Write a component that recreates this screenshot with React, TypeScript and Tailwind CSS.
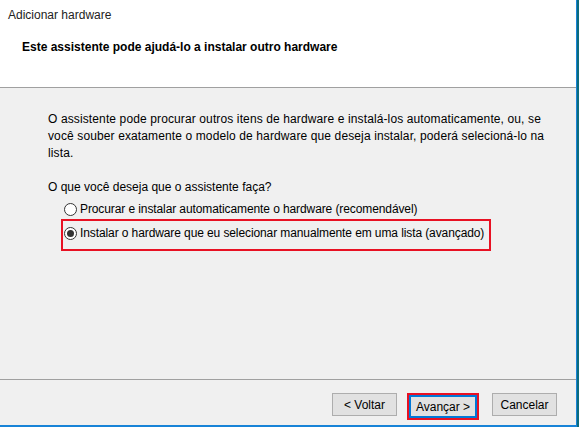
import { useState } from "react";

const options = [
  { id: "auto", label: "Procurar e instalar automaticamente o hardware (recomendável)" },
  { id: "manual", label: "Instalar o hardware que eu selecionar manualmente em uma lista (avançado)" },
];

const Radio = ({ checked }: { checked: boolean }) => (
  <span className="flex h-[13px] w-[13px] shrink-0 items-center justify-center rounded-full border border-[#333] bg-white">
    {checked && <span className="h-[7px] w-[7px] rounded-full bg-[#333]" />}
  </span>
);

const App = () => {
  const [choice, setChoice] = useState("manual");

  return (
    <div className="flex h-[427px] w-[579px] bg-[#0b6b7d] font-['Liberation_Sans',sans-serif] text-[12px] text-black">
      <div className="flex h-[427px] w-[577px] flex-col border-r border-b-2 border-[#1883d7] bg-[#f0f0f0]">
        <header className="h-[88px] border-b border-[#a0a0a0] bg-white">
          <div className="pl-[8px] pt-[7px] leading-[16px] text-[#222]">Adicionar hardware</div>
          <h1 className="mt-[16px] pl-[22px] text-[12px] font-bold leading-[16px]">
            Este assistente pode ajudá-lo a instalar outro hardware
          </h1>
        </header>

        <main className="flex-1 pl-[48px] pt-[23px] leading-[17px]">
          <p className="whitespace-nowrap tracking-[0.12px]">
            O assistente pode procurar outros itens de hardware e instalá-los automaticamente, ou, se
            <br />
            você souber exatamente o modelo de hardware que deseja instalar, poderá selecioná-lo na
            <br />
            lista.
          </p>
          <p className="mt-[17px]">O que você deseja que o assistente faça?</p>
          <div className="mt-[3px] flex flex-col">
            {options.map(({ id, label }) => {
              const checked = choice === id;
              return (
                <button
                  key={id}
                  onClick={() => setChoice(id)}
                  className={
                    checked
                      ? "ml-[13px] flex h-[32px] w-[430px] items-center gap-[3px] border-2 border-[#e81123] pb-[3px] pl-[1px] text-left"
                      : "ml-[16px] flex h-[20px] items-center gap-[3px] text-left"
                  }
                >
                  <Radio checked={checked} />
                  <span className="whitespace-nowrap tracking-[-0.1px]">{label}</span>
                </button>
              );
            })}
          </div>
        </main>

        <footer className="flex h-[46px] items-start justify-end border-t border-[#a0a0a0] pr-[19px] pt-[13px]">
          <button className="h-[23px] w-[65px] border border-[#adadad] bg-[#e1e1e1]">&lt; Voltar</button>
          <span className="ml-[10px] border-2 border-[#e81123]">
            <button className="block h-[23px] w-[68px] border-2 border-[#0078d7] bg-[#e1e1e1]">Avançar &gt;</button>
          </span>
          <button className="ml-[13px] h-[23px] w-[65px] border border-[#adadad] bg-[#e1e1e1]">Cancelar</button>
        </footer>
      </div>
    </div>
  );
};

export default App;
